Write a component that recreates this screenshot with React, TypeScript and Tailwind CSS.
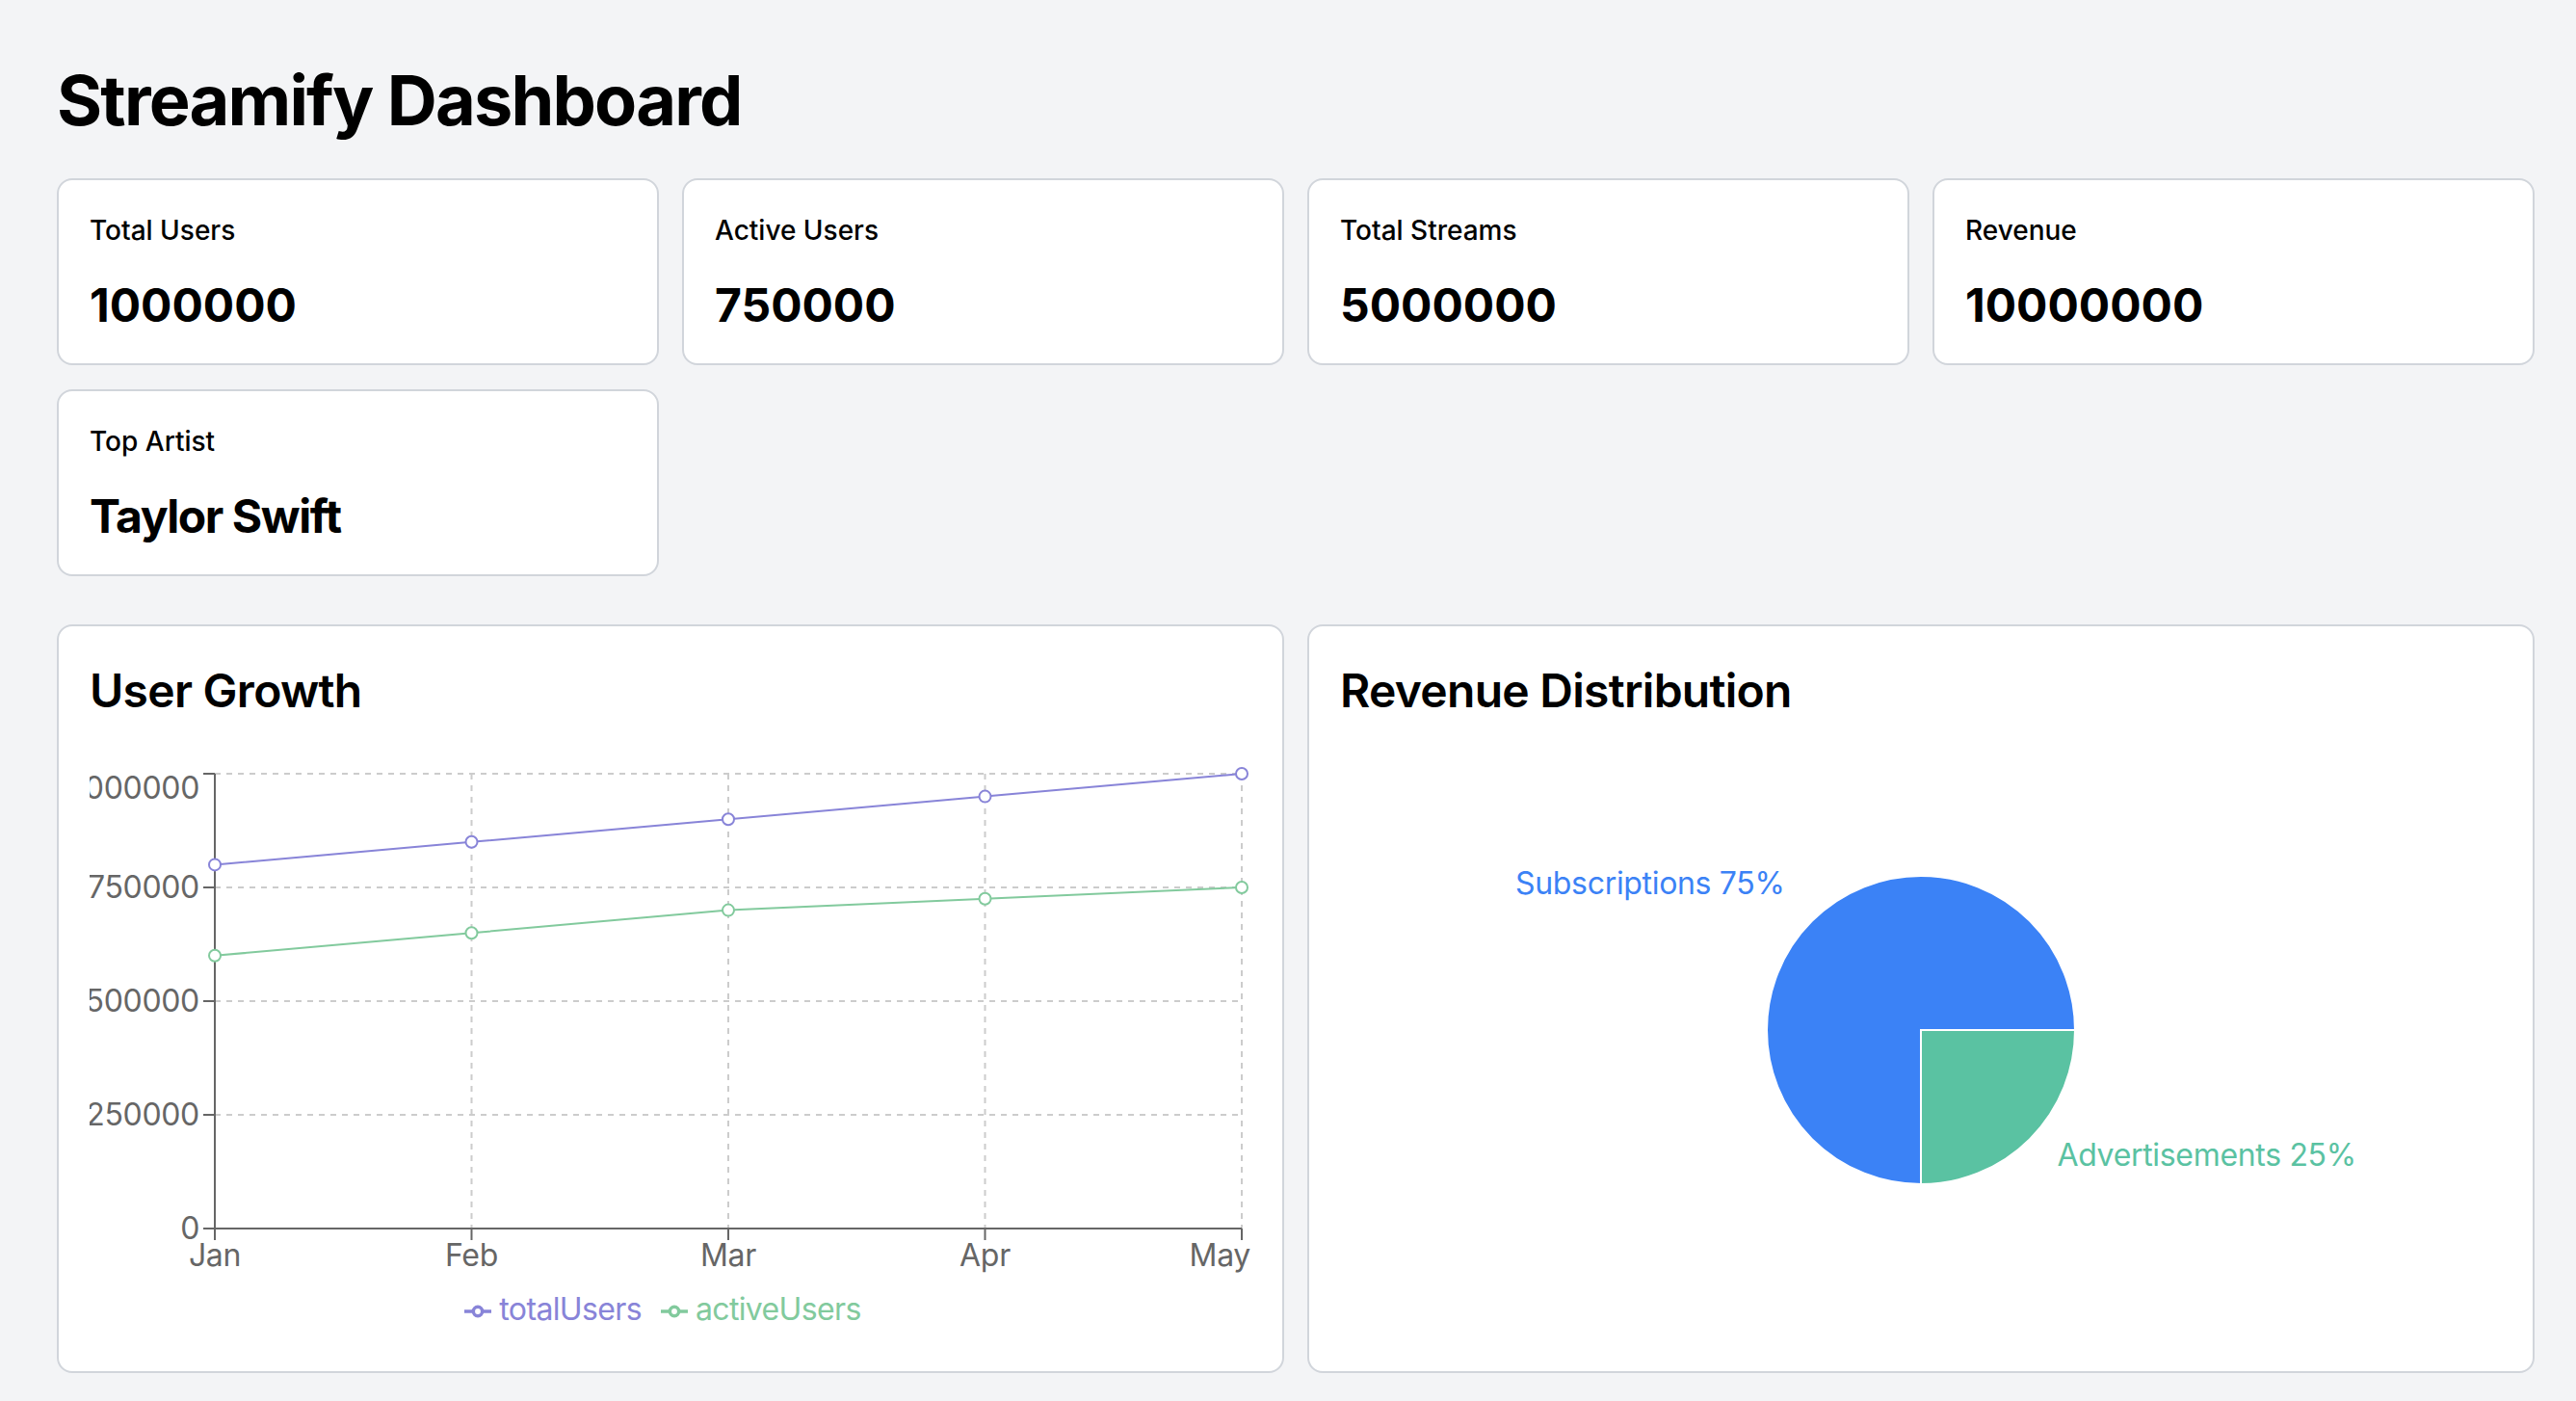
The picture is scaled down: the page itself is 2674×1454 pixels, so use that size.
import React from "react";

const FONT = { fontFamily: "Inter, 'Noto Sans', 'Liberation Sans', sans-serif" };
const CHART_FONT = { fontFamily: "Inter, 'Noto Sans', 'Liberation Sans', sans-serif", letterSpacing: "-0.02em" };

const stats = [
  { label: "Total Users", value: "1000000", text: false },
  { label: "Active Users", value: "750000", text: false },
  { label: "Total Streams", value: "5000000", text: false },
  { label: "Revenue", value: "10000000", text: false },
  { label: "Top Artist", value: "Taylor Swift", text: true },
];

const growth = [
  { m: "Jan", t: 800000, a: 600000 },
  { m: "Feb", t: 850000, a: 650000 },
  { m: "Mar", t: 900000, a: 700000 },
  { m: "Apr", t: 950000, a: 725000 },
  { m: "May", t: 1000000, a: 750000 },
];

const W = 1206;
const PL = 130;
const PR = 1196;
const PT = 10;
const PB = 482;
const xAt = (i: number) => PL + ((PR - PL) / 4) * i;
const yAt = (v: number) => PB - (v / 1000000) * (PB - PT);
const yTicks = [0, 250000, 500000, 750000, 1000000];

function LegendIcon({ color }: { color: string }) {
  return (
    <svg width="28" height="28" viewBox="0 0 32 32" className="inline-block align-middle mr-[8px]">
      <path
        strokeWidth="4"
        fill="none"
        stroke={color}
        d="M0,16h10.666666666666666A5.333333333333333,5.333333333333333,0,1,1,21.333333333333332,16H32M21.333333333333332,16A5.333333333333333,5.333333333333333,0,1,1,10.666666666666666,16"
      />
    </svg>
  );
}

function LineChart() {
  const tPts = growth.map((d, i) => `${xAt(i)},${yAt(d.t)}`).join(" ");
  const aPts = growth.map((d, i) => `${xAt(i)},${yAt(d.a)}`).join(" ");
  return (
    <div className="w-[1206px] h-[600px] flex flex-col">
      <svg width={W} height={542} className="block" style={CHART_FONT}>
        {yTicks.map((v) => (
          <line key={"h" + v} x1={PL} x2={PR} y1={yAt(v)} y2={yAt(v)} stroke="#ccc" strokeWidth="2" strokeDasharray="6 6" />
        ))}
        {growth.map((d, i) => (
          <line key={"v" + i} x1={xAt(i)} x2={xAt(i)} y1={PT} y2={PB} stroke="#ccc" strokeWidth="2" strokeDasharray="6 6" />
        ))}
        <line x1={PL} x2={PL} y1={PT} y2={PB} stroke="#666" strokeWidth="2" />
        {yTicks.map((v) => (
          <g key={"yt" + v}>
            <line x1={PL - 12} x2={PL} y1={yAt(v)} y2={yAt(v)} stroke="#666" strokeWidth="2" />
            <text
              x={PL - 16}
              y={v === 1000000 ? 36 : yAt(v) + 11.4}
              textAnchor="end"
              fill="#666"
              fontSize="32"
            >
              {v}
            </text>
          </g>
        ))}
        <line x1={PL} x2={PR} y1={PB} y2={PB} stroke="#666" strokeWidth="2" />
        {growth.map((d, i) => (
          <g key={"xt" + i}>
            <line x1={xAt(i)} x2={xAt(i)} y1={PB} y2={PB + 12} stroke="#666" strokeWidth="2" />
            <text
              x={i === 4 ? W - 1 : xAt(i)}
              y={PB + 16 + 22.7}
              textAnchor={i === 4 ? "end" : "middle"}
              fill="#666"
              fontSize="32"
            >
              {d.m}
            </text>
          </g>
        ))}
        <polyline points={tPts} fill="none" stroke="#8884d8" strokeWidth="2" />
        <polyline points={aPts} fill="none" stroke="#82ca9d" strokeWidth="2" />
        {growth.map((d, i) => (
          <circle key={"ct" + i} cx={xAt(i)} cy={yAt(d.t)} r="6" fill="#fff" stroke="#8884d8" strokeWidth="2" />
        ))}
        {growth.map((d, i) => (
          <circle key={"ca" + i} cx={xAt(i)} cy={yAt(d.a)} r="6" fill="#fff" stroke="#82ca9d" strokeWidth="2" />
        ))}
      </svg>
      <ul className="h-[48px] text-center text-[32px] leading-[48px] m-0 p-0 pl-[4px]" style={CHART_FONT}>
        <li className="inline-block mr-[20px] text-[#8884d8]">
          <LegendIcon color="#8884d8" />
          <span>totalUsers</span>
        </li>
        <li className="inline-block mr-[20px] text-[#82ca9d]">
          <LegendIcon color="#82ca9d" />
          <span>activeUsers</span>
        </li>
      </ul>
    </div>
  );
}

function PieChart() {
  const cx = 603;
  const cy = 276;
  const r = 160;
  const d = 141.42;
  return (
    <div className="w-[1206px] h-[600px]">
      <svg width={W} height={600} className="block" style={CHART_FONT}>
        <path d={`M${cx},${cy}L${cx + r},${cy}A${r},${r},0,1,0,${cx},${cy + r}Z`} fill="#3b82f6" stroke="#fff" strokeWidth="2" />
        <path d={`M${cx},${cy}L${cx},${cy + r}A${r},${r},0,0,0,${cx + r},${cy}Z`} fill="#5ac2a2" stroke="#fff" strokeWidth="2" />
        <text x={cx - d} y={cy - d} textAnchor="end" fill="#3b82f6" fontSize="32">
          Subscriptions 75%
        </text>
        <text x={cx + d} y={cy + d} textAnchor="start" fill="#5ac2a2" fontSize="32">
          Advertisements 25%
        </text>
      </svg>
    </div>
  );
}

export default function App() {
  return (
    <div className="min-h-screen bg-[#f3f4f6] pl-[59px] pr-[43px] pt-[64px] pb-[28px] text-black" style={FONT}>
      <h1 className="text-[72px] leading-[80px] font-bold tracking-tight mb-[41px]">Streamify Dashboard</h1>
      <div className="grid grid-cols-4 gap-x-[24px] gap-y-[25px]">
        {stats.map((s) => (
          <div key={s.label} className="bg-white border-2 border-[#d1d5db] rounded-[16px] px-[32px] pt-[32px] pb-[28px]">
            <div className="text-[28px] leading-[40px] font-medium">{s.label}</div>
            <div
              className={
                s.text
                  ? "text-[48px] leading-[64px] font-bold mt-[26px] tracking-[-0.03em]"
                  : "text-[48px] leading-[64px] font-bold mt-[26px]"
              }
            >
              {s.value}
            </div>
          </div>
        ))}
      </div>
      <div className="grid grid-cols-2 gap-[24px] mt-[50px]">
        <div className="bg-white border-2 border-[#d1d5db] rounded-[16px] px-[32px] pt-[35px] pb-[30px]">
          <h2 className="text-[48px] leading-[64px] font-semibold tracking-[-0.015em] mb-[44px]">User Growth</h2>
          <LineChart />
        </div>
        <div className="bg-white border-2 border-[#d1d5db] rounded-[16px] px-[32px] pt-[35px] pb-[30px]">
          <h2 className="text-[48px] leading-[64px] font-semibold tracking-[-0.015em] mb-[44px]">Revenue Distribution</h2>
          <PieChart />
        </div>
      </div>
    </div>
  );
}
